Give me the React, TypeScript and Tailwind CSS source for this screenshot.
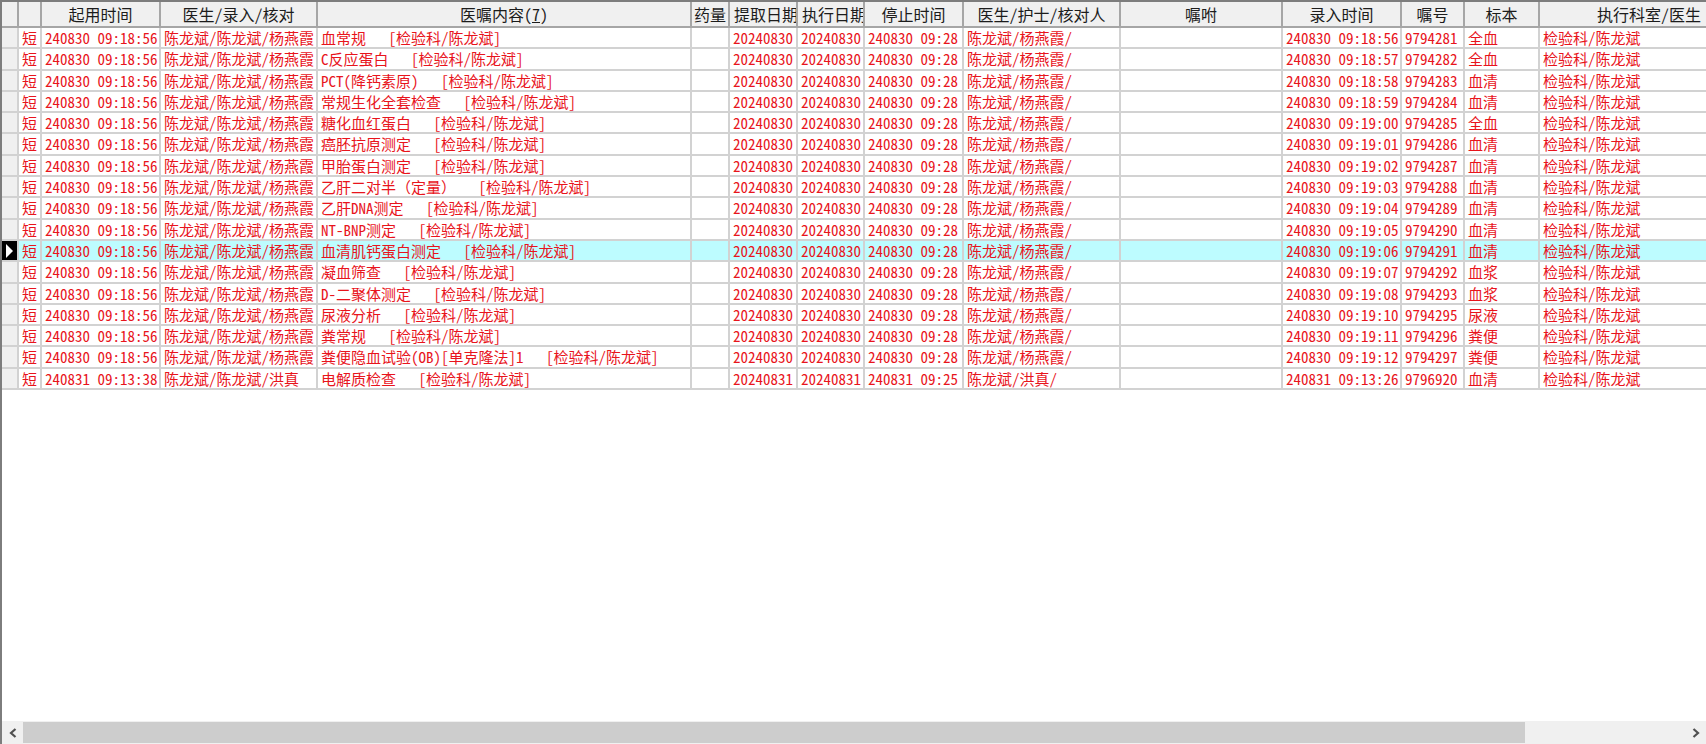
import React from "react";

const cols =
  "grid grid-cols-[17px_23px_119px_157px_374px_38px_68px_67px_99px_157px_162px_119px_63px_75px_220px]";

const rows = [
  { name: "血常规", time: "240830 09:18:56", entry: "240830 09:18:56", no: "9794281", sample: "全血" },
  { name: "C反应蛋白", time: "240830 09:18:56", entry: "240830 09:18:57", no: "9794282", sample: "全血" },
  { name: "PCT(降钙素原)", time: "240830 09:18:56", entry: "240830 09:18:58", no: "9794283", sample: "血清" },
  { name: "常规生化全套检查", time: "240830 09:18:56", entry: "240830 09:18:59", no: "9794284", sample: "血清" },
  { name: "糖化血红蛋白", time: "240830 09:18:56", entry: "240830 09:19:00", no: "9794285", sample: "全血" },
  { name: "癌胚抗原测定", time: "240830 09:18:56", entry: "240830 09:19:01", no: "9794286", sample: "血清" },
  { name: "甲胎蛋白测定", time: "240830 09:18:56", entry: "240830 09:19:02", no: "9794287", sample: "血清" },
  { name: "乙肝二对半（定量）", time: "240830 09:18:56", entry: "240830 09:19:03", no: "9794288", sample: "血清" },
  { name: "乙肝DNA测定", time: "240830 09:18:56", entry: "240830 09:19:04", no: "9794289", sample: "血清" },
  { name: "NT-BNP测定", time: "240830 09:18:56", entry: "240830 09:19:05", no: "9794290", sample: "血清" },
  { name: "血清肌钙蛋白测定", time: "240830 09:18:56", entry: "240830 09:19:06", no: "9794291", sample: "血清", active: true },
  { name: "凝血筛查", time: "240830 09:18:56", entry: "240830 09:19:07", no: "9794292", sample: "血浆" },
  { name: "D-二聚体测定", time: "240830 09:18:56", entry: "240830 09:19:08", no: "9794293", sample: "血浆" },
  { name: "尿液分析", time: "240830 09:18:56", entry: "240830 09:19:10", no: "9794295", sample: "尿液" },
  { name: "粪常规", time: "240830 09:18:56", entry: "240830 09:19:11", no: "9794296", sample: "粪便" },
  { name: "粪便隐血试验(OB)[单克隆法]1", time: "240830 09:18:56", entry: "240830 09:19:12", no: "9794297", sample: "粪便" },
  { name: "电解质检查", time: "240831 09:13:38", entry: "240831 09:13:26", no: "9796920", sample: "血清", last: true },
];

const Head = ({ children, left }: { children?: React.ReactNode; left?: boolean }) => (
  <div
    className={`overflow-hidden whitespace-nowrap border-r-2 border-b-2 border-[#a6a6a6] bg-[#f0f0f0] text-[16px] leading-[25px] text-[#1c1c1c] ${
      left ? "pl-[4px] text-left" : "text-center"
    }`}
  >
    {children}
  </div>
);

const Cell = ({ text, className = "" }: { text?: string; className?: string }) => (
  <div
    className={`overflow-hidden whitespace-pre border-r-2 border-b-2 border-[#d2d2d2] pl-[3px] leading-[20px] ${className}`}
  >
    {text}
  </div>
);

export default function App() {
  return (
    <div className="flex h-screen w-full flex-col overflow-hidden bg-white font-['Noto_Sans_Mono_CJK_SC','Noto_Sans_CJK_SC',monospace] text-[15px] text-[#e8141c]">
      <div className="flex min-h-0 flex-1 flex-col overflow-hidden border-l-2 border-t-2 border-[#7d7d7d]">
        <div className={`${cols} h-[26px] shrink-0`}>
          <Head />
          <Head />
          <Head>起用时间</Head>
          <Head>医生/录入/核对</Head>
          <Head>
            医嘱内容(<span className="underline">7</span>)
          </Head>
          <Head>药量</Head>
          <Head left>提取日期</Head>
          <Head left>执行日期</Head>
          <Head>停止时间</Head>
          <Head>医生/护士/核对人</Head>
          <Head>嘱咐</Head>
          <Head>录入时间</Head>
          <Head>嘱号</Head>
          <Head>标本</Head>
          <Head>执行科室/医生</Head>
        </div>

        {rows.map((row) => (
          <div key={row.no} className={`${cols} h-[21.3px] shrink-0 ${row.active ? "bg-[#bdfcff]" : ""}`}>
            <div
              className={`flex items-center justify-center border-r-2 border-b-2 border-[#d2d2d2] ${
                row.active ? "bg-black" : "bg-[#f0f0f0]"
              }`}
            >
              {row.active ? (
                <svg width="9" height="14" viewBox="0 0 9 14">
                  <path d="M1 0 L8 7 L1 14 Z" fill="#fff" />
                </svg>
              ) : null}
            </div>
            <Cell text="短" />
            <Cell text={row.time} />
            <Cell text={row.last ? "陈龙斌/陈龙斌/洪真" : "陈龙斌/陈龙斌/杨燕霞"} />
            <Cell text={`${row.name}   [检验科/陈龙斌]`} />
            <Cell />
            <Cell text={row.last ? "20240831" : "20240830"} />
            <Cell text={row.last ? "20240831" : "20240830"} />
            <Cell text={row.last ? "240831 09:25" : "240830 09:28"} />
            <Cell text={row.last ? "陈龙斌/洪真/" : "陈龙斌/杨燕霞/"} />
            <Cell />
            <Cell text={row.entry} />
            <Cell text={row.no} />
            <Cell text={row.sample} />
            <Cell text="检验科/陈龙斌" />
          </div>
        ))}
      </div>

      {/* horizontal scrollbar */}
      <div className="flex h-[23px] shrink-0 border-l-2 border-[#7d7d7d] bg-[#f0f0f0] text-[#505050]">
        <div className="flex w-[21px] items-center justify-center">
          <svg width="10" height="10" viewBox="0 0 10 10">
            <path d="M7.5 1 L3 5 L7.5 9" fill="none" stroke="currentColor" strokeWidth="2.2" />
          </svg>
        </div>
        <div className="my-[1px] w-[1502px] bg-[#cdcdcd]" />
        <div className="flex flex-1 items-center justify-end pr-[5px]">
          <svg width="10" height="10" viewBox="0 0 10 10">
            <path d="M2.5 1 L7 5 L2.5 9" fill="none" stroke="currentColor" strokeWidth="2.2" />
          </svg>
        </div>
      </div>
    </div>
  );
}
